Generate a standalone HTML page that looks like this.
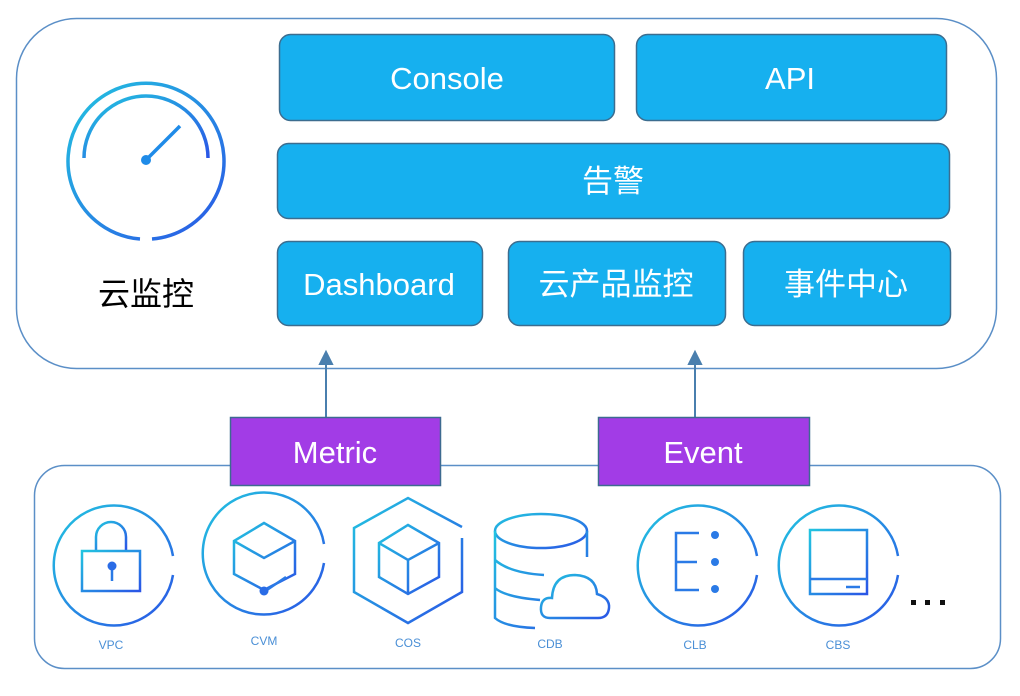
<!DOCTYPE html>
<html><head><meta charset="utf-8"><style>
html,body{margin:0;padding:0;background:#fff;}
svg{display:block}
text{font-family:"Liberation Sans","Noto Sans CJK SC",sans-serif;}
</style></head><body>
<svg width="1020" height="696" viewBox="0 0 1020 696" xmlns="http://www.w3.org/2000/svg">
<defs>
<linearGradient id="g" x1="0" y1="0" x2="1" y2="1">
<stop offset="0" stop-color="#22c4e0"/><stop offset="1" stop-color="#2a55e6"/>
</linearGradient>
</defs>
<rect x="16.5" y="18.5" width="980" height="350" rx="60" fill="#fff" stroke="#5b8fc7" stroke-width="1.5"/>
<rect x="34.5" y="465.5" width="966" height="203" rx="30" fill="#fff" stroke="#5b8fc7" stroke-width="1.5"/>

<g fill="#16b0ef" stroke="#3c6d8f" stroke-width="1.5">
<rect x="279.5" y="34.5" width="335" height="86" rx="11"/>
<rect x="636.5" y="34.5" width="310" height="86" rx="11"/>
<rect x="277.5" y="143.5" width="672" height="75" rx="11"/>
<rect x="277.5" y="241.5" width="205" height="84" rx="11"/>
<rect x="508.5" y="241.5" width="217" height="84" rx="11"/>
<rect x="743.5" y="241.5" width="207" height="84" rx="11"/>
</g>
<g fill="#fff" font-size="31" text-anchor="middle">
<text x="447" y="89">Console</text>
<text x="790" y="89">API</text>
<text x="613" y="192">告警</text>
<text x="379" y="295">Dashboard</text>
<text x="616" y="295">云产品监控</text>
<text x="846" y="295">事件中心</text>
</g>

<!-- gauge -->
<g fill="none" stroke="url(#g)" stroke-width="3.5" stroke-linecap="butt">
<path d="M140 239 A78 78 0 1 1 152 239"/>
<path d="M84 158 A62 62 0 0 1 208 158"/>
</g>
<path d="M146 160 L180 126" stroke="#1f8be8" stroke-width="3.5"/>
<circle cx="146" cy="160" r="5" fill="#1f8be8"/>
<text x="146" y="305" font-size="32" text-anchor="middle" fill="#000">云监控</text>

<!-- arrows -->
<g stroke="#4a7fae" stroke-width="2" fill="#4a7fae">
<line x1="326" y1="362" x2="326" y2="417"/><path d="M320 364 L326 352 L332 364Z"/>
<line x1="695" y1="362" x2="695" y2="417"/><path d="M689 364 L695 352 L701 364Z"/>
</g>
<rect x="230.5" y="417.5" width="210" height="68" fill="#a23ce6" stroke="#3d6a90" stroke-width="1.5"/>
<rect x="598.5" y="417.5" width="211" height="68" fill="#a23ce6" stroke="#3d6a90" stroke-width="1.5"/>
<text x="335" y="463" font-size="31" fill="#fff" text-anchor="middle">Metric</text>
<text x="703" y="463" font-size="31" fill="#fff" text-anchor="middle">Event</text>

<!-- icons -->
<g fill="none" stroke="url(#g)" stroke-width="2.5">
<path d="M173 575 A60 60 0 1 1 173 556"/>
<path d="M96 550 V537 A15 15 0 0 1 126 537 V550"/>
<rect x="82" y="551" width="58" height="40"/>
<path d="M324 563 A61 61 0 1 1 324 544"/>
<path d="M264 523 L295 541 L295 574 L264 590 L234 574 L234 541 Z M234 541 L264 558 L295 541"/>
<path d="M462 527 L408 498 L354 528 L354 592 L408 623 L462 592 L462 538"/>
<path d="M408 525 L439 543 L439 577 L408 594 L379 577 L379 543 Z M379 543 L408 560 L439 543 M408 560 L408 594"/>
<ellipse cx="541" cy="531" rx="46" ry="17"/>
<path d="M495 531 V618 Q505 627 535 628 M587 531 V557 M495 560 Q510 573 544 575 M495 588 Q505 597 540 600"/>
<path d="M550 618 Q540 618 541 607 Q542 597 552 598 Q553 575 575 575 Q596 576 597 594 Q610 598 609 608 Q608 618 598 618 Z"/>
<path d="M757 575 A60 60 0 1 1 757 556"/>
<path d="M898 575 A60 60 0 1 1 898 556"/>
<rect x="810" y="530" width="57" height="64"/>
</g>
<g stroke="#2a7ae6" stroke-width="2.5" fill="none">
<line x1="112" y1="568" x2="112" y2="581"/>
<line x1="264" y1="592" x2="286" y2="577"/>
<path d="M699 533 H676 V590 H699 M676 562 H697"/>
<line x1="810" y1="579" x2="867" y2="579"/>
<line x1="846" y1="587" x2="860" y2="587"/>
</g>
<circle cx="264" cy="591" r="4.5" fill="#2a6ce6"/>
<circle cx="112" cy="566" r="4.5" fill="#2a6ce6"/>
<circle cx="715" cy="535" r="4" fill="#2a7ae6"/>
<circle cx="715" cy="562" r="4" fill="#2a7ae6"/>
<circle cx="715" cy="589" r="4" fill="#2a7ae6"/>
<g fill="#111"><rect x="911" y="600" width="5" height="5"/><rect x="925" y="600" width="5" height="5"/><rect x="940" y="600" width="5" height="5"/></g>
<g font-size="12" fill="#4a8fd6" text-anchor="middle">
<text x="111" y="649">VPC</text>
<text x="264" y="645">CVM</text>
<text x="408" y="647">COS</text>
<text x="550" y="648">CDB</text>
<text x="695" y="649">CLB</text>
<text x="838" y="649">CBS</text>
</g>
</svg>
</body></html>
